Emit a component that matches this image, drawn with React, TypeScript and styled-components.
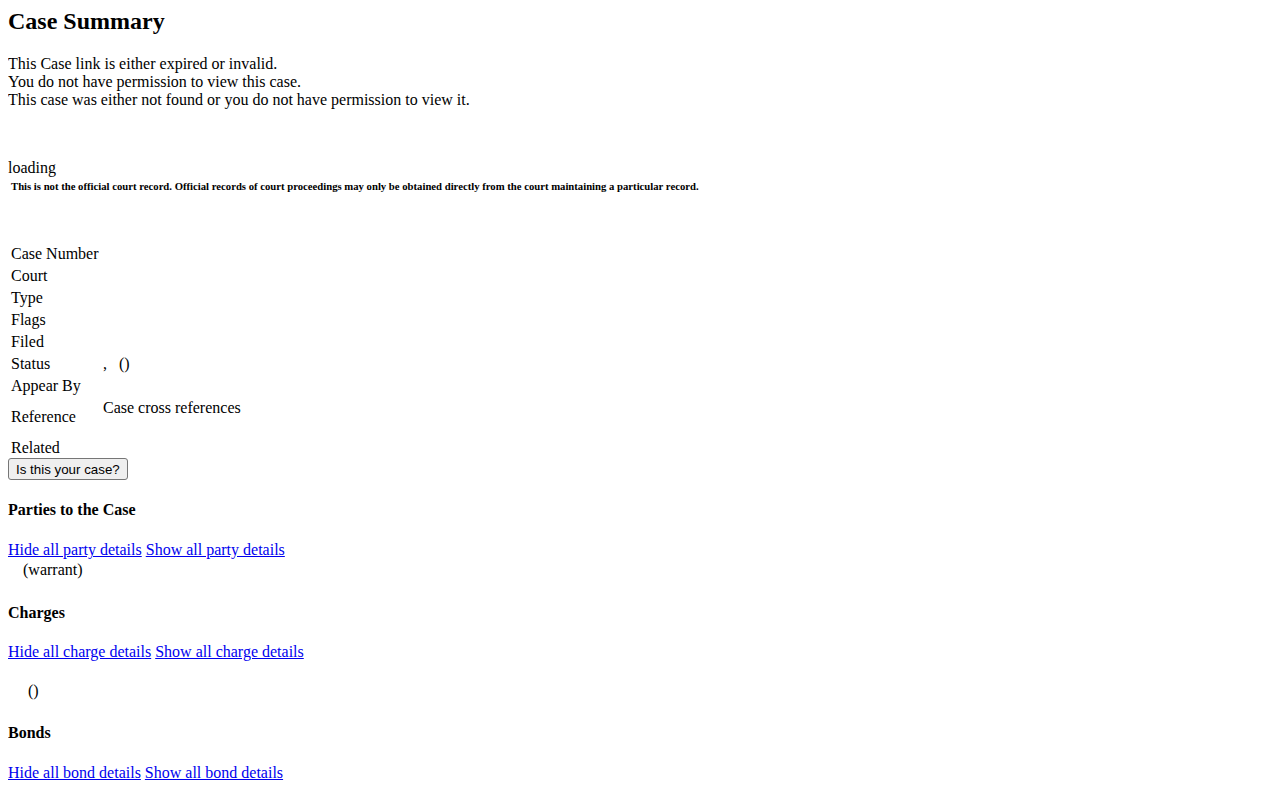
import styled, { createGlobalStyle } from "styled-components";

const GlobalStyle = createGlobalStyle`
  body {
    margin: 8px;
    font-family: "Liberation Serif", "Times New Roman", serif;
    font-size: 16px;
    color: #000;
    background: #fff;
  }
`;

const Page = styled.div`
  display: block;
`;

const Title = styled.h2`
  font-size: 24px;
  font-weight: bold;
  margin: 0 0 20px;
`;

const Notice = styled.div`
  line-height: 18px;
`;

const Loading = styled.div`
  margin-top: 50px;
`;

const Disclaimer = styled.table`
  border-spacing: 2px;
  font-size: 10.7px;
  font-weight: bold;

  td {
    padding: 1px;
  }
`;

const InfoTable = styled.table`
  margin-top: 47px;
  margin-bottom: -2px;
  border-spacing: 2px;

  td {
    padding: 1px;
    vertical-align: middle;
  }
`;

const Label = styled.td`
  width: 88px;
`;

const CrossRefs = styled.div`
  padding-bottom: 18px;
`;

const Button = styled.button`
  display: block;
  font-family: "Liberation Sans", Arial, sans-serif;
  font-size: 13.33px;
  padding: 1px 7px;
  border: 1px solid #767676;
  border-radius: 3px;
  background: #efefef;
  color: #000;
  height: 22px;
`;

const SectionTitle = styled.h4<{ $top?: number; $bottom?: number }>`
  font-size: 16px;
  font-weight: bold;
  margin: ${({ $top }) => $top ?? 21}px 0 ${({ $bottom }) => $bottom ?? 21}px;
`;

const Links = styled.div`
  a {
    color: #0000ee;
    text-decoration: underline;
  }
`;

const Indented = styled.div<{ $left: number; $top?: number }>`
  padding-left: ${({ $left }) => $left}px;
  margin-top: ${({ $top }) => $top ?? 0}px;
`;

const rows = ["Case Number", "Court", "Type", "Flags", "Filed"];

export default function App() {
  return (
    <Page>
      <GlobalStyle />
      <Title>Case Summary</Title>
      <Notice>This Case link is either expired or invalid.</Notice>
      <Notice>You do not have permission to view this case.</Notice>
      <Notice>This case was either not found or you do not have permission to view it.</Notice>
      <Loading>loading</Loading>
      <Disclaimer>
        <tbody>
          <tr>
            <td>
              This is not the official court record. Official records of court proceedings may
              only be obtained directly from the court maintaining a particular record.
            </td>
          </tr>
        </tbody>
      </Disclaimer>
      <InfoTable>
        <tbody>
          {rows.map((r) => (
            <tr key={r}>
              <Label>{r}</Label>
              <td></td>
            </tr>
          ))}
          <tr>
            <Label>Status</Label>
            <td>
              ,&nbsp;&nbsp; ()
            </td>
          </tr>
          <tr>
            <Label>Appear By</Label>
            <td></td>
          </tr>
          <tr>
            <Label>Reference</Label>
            <td>
              <CrossRefs>Case cross references</CrossRefs>
            </td>
          </tr>
          <tr>
            <Label>Related</Label>
            <td></td>
          </tr>
        </tbody>
      </InfoTable>
      <Button type="button">Is this your case?</Button>

      <SectionTitle $bottom={22}>Parties to the Case</SectionTitle>
      <Links>
        <a href="#">Hide all party details</a> <a href="#">Show all party details</a>
      </Links>
      <Indented $left={15} $top={2}>
        (warrant)
      </Indented>

      <SectionTitle $top={25}>Charges</SectionTitle>
      <Links>
        <a href="#">Hide all charge details</a> <a href="#">Show all charge details</a>
      </Links>
      <Indented $left={20} $top={21}>
        ()
      </Indented>

      <SectionTitle $top={24} $bottom={22}>
        Bonds
      </SectionTitle>
      <Links>
        <a href="#">Hide all bond details</a> <a href="#">Show all bond details</a>
      </Links>
    </Page>
  );
}
